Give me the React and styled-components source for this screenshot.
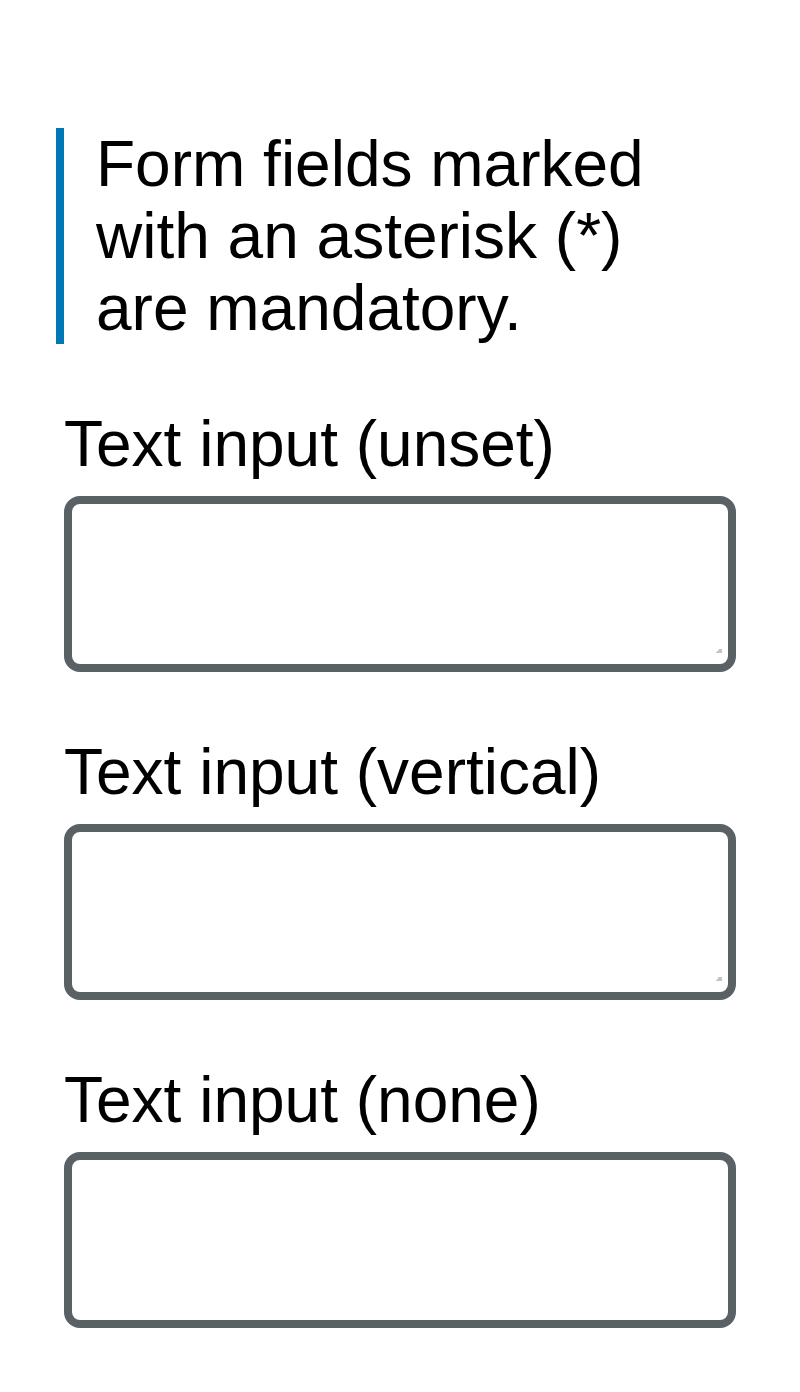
import React from "react"
import styled, { createGlobalStyle } from "styled-components"

const GlobalStyle = createGlobalStyle`
  html, body {
    margin: 0;
    padding: 0;
    background: #ffffff;
  }

  body {
    font-family: "Liberation Sans", Arial, sans-serif;
    color: #000000;
  }
`

const Page = styled.main`
  display: flex;
  flex-direction: column;
  padding: 128px 64px 64px;
  font-size: 64px;
  line-height: 72px;
`

const Note = styled.p`
  margin: 0 0 64px -8px;
  padding: 0 40px 0 32px;
  border-left: 8px solid #0077b6;
  max-width: 600px;
`

const Field = styled.div`
  display: flex;
  flex-direction: column;
  gap: 16px;
  margin-bottom: 64px;
`

const Label = styled.label`
  display: block;
`

const TextArea = styled.textarea`
  box-sizing: border-box;
  display: block;
  width: 100%;
  height: 176px;
  margin: 0;
  padding: 16px;
  border: 8px solid #596165;
  border-radius: 16px;
  background: #ffffff;
  font: inherit;
  resize: ${(p) => p.$resize};
  outline: none;

  /* small grey triangle instead of the striped grip */
  &::-webkit-resizer {
    background: linear-gradient(135deg, transparent 50%, #c4c4c4 50%) 2px -3px / 7px 7px no-repeat;
  }
`

const fields = [
  { id: "unset", label: "Text input (unset)", resize: "both" },
  { id: "vertical", label: "Text input (vertical)", resize: "vertical" },
  { id: "none", label: "Text input (none)", resize: "none" },
]

const App = () => (
  <>
    <GlobalStyle />
    <Page>
      <Note>Form fields marked with an asterisk (*) are mandatory.</Note>
      {fields.map((f) => (
        <Field key={f.id}>
          <Label htmlFor={f.id}>{f.label}</Label>
          <TextArea id={f.id} $resize={f.resize} />
        </Field>
      ))}
    </Page>
  </>
)

export default App
